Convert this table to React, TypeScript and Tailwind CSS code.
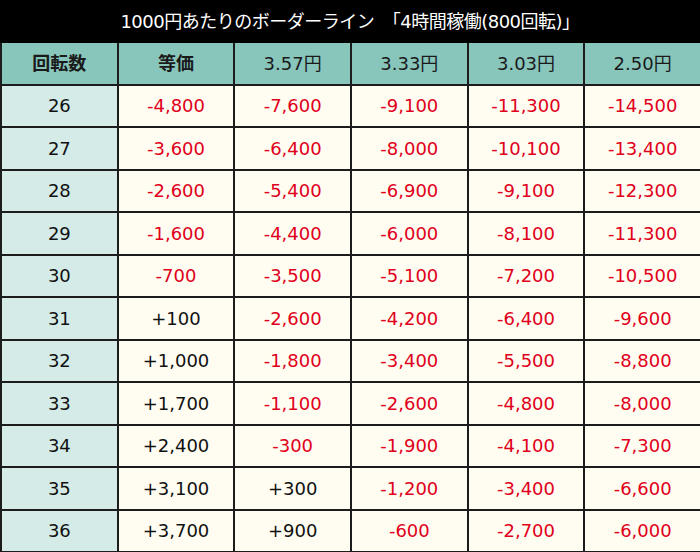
import React from "react";

const cols = ["回転数", "等価", "3.57円", "3.33円", "3.03円", "2.50円"];

const rows: [number, string[]][] = [
  [26, ["-4,800", "-7,600", "-9,100", "-11,300", "-14,500"]],
  [27, ["-3,600", "-6,400", "-8,000", "-10,100", "-13,400"]],
  [28, ["-2,600", "-5,400", "-6,900", "-9,100", "-12,300"]],
  [29, ["-1,600", "-4,400", "-6,000", "-8,100", "-11,300"]],
  [30, ["-700", "-3,500", "-5,100", "-7,200", "-10,500"]],
  [31, ["+100", "-2,600", "-4,200", "-6,400", "-9,600"]],
  [32, ["+1,000", "-1,800", "-3,400", "-5,500", "-8,800"]],
  [33, ["+1,700", "-1,100", "-2,600", "-4,800", "-8,000"]],
  [34, ["+2,400", "-300", "-1,900", "-4,100", "-7,300"]],
  [35, ["+3,100", "+300", "-1,200", "-3,400", "-6,600"]],
  [36, ["+3,700", "+900", "-600", "-2,700", "-6,000"]],
];

const font = { fontFamily: '"DejaVu Sans", "Noto Sans CJK JP", sans-serif' };

export default function App() {
  return (
    <div className="w-[700px] h-[552px] bg-[#1c1c1c] overflow-hidden" style={font}>
      {/* TITLE */}
      <div className="h-[43px] bg-black text-white flex items-center justify-center text-[18px] tracking-[-0.5px]">
        1000円あたりのボーダーライン　「4時間稼働(800回転)」
      </div>

      {/* TABLE */}
      <div className="grid grid-cols-6 gap-[2px] pl-[2px] pb-[2px]">
        {cols.map((c, i) => (
          <div
            key={c}
            className={`h-[40.5px] bg-[#88c6bc] flex items-center justify-center text-[18px] text-[#1a1a1a] ${i < 2 ? "font-bold" : ""}`}
          >
            {c}
          </div>
        ))}
        {rows.map(([n, vals]) => (
          <React.Fragment key={n}>
            <div className="h-[40.5px] bg-[#d4ebe7] flex items-center justify-center text-[18px] text-[#111]">
              {n}
            </div>
            {vals.map((v, j) => (
              <div
                key={j}
                className={`h-[40.5px] bg-[#fffdf1] flex items-center justify-center text-[18px] ${
                  v.startsWith("-") ? "text-[#e0001b]" : "text-[#111]"
                }`}
              >
                {v}
              </div>
            ))}
          </React.Fragment>
        ))}
      </div>
    </div>
  );
}
